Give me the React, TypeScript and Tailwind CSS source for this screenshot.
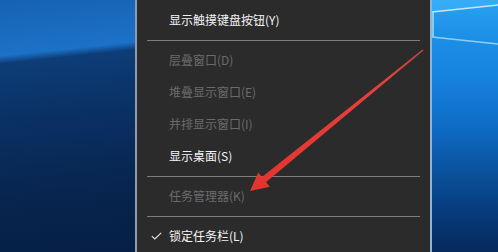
import React from 'react'

type Item = { label: string; disabled?: boolean; checked?: boolean } | 'sep'

const ITEMS: Item[] = [
    { label: '显示触摸键盘按钮(Y)' },
    'sep',
    { label: '层叠窗口(D)', disabled: true },
    { label: '堆叠显示窗口(E)', disabled: true },
    { label: '并排显示窗口(I)', disabled: true },
    { label: '显示桌面(S)' },
    'sep',
    { label: '任务管理器(K)', disabled: true },
    'sep',
    { label: '锁定任务栏(L)', checked: true },
]

const MenuRow: React.FC<{ item: Exclude<Item, 'sep'> }> = ({ item }) => (
    <div className="relative h-8 flex items-center pl-8 shrink-0">
        {item.checked && (
            <svg className="absolute left-[14px] top-[12px]" width="11" height="8" viewBox="0 0 11 8">
                <path d="M0.8 4.2 L3.8 7 L10.2 0.8" fill="none" stroke="#e6e6e6" strokeWidth="1.1" />
            </svg>
        )}
        <span className={item.disabled ? 'text-[#6b6b6b]' : 'text-[#f3f3f3]'}>{item.label}</span>
    </div>
)

const App: React.FC = () => {
    return (
        <div
            className="relative w-[498px] h-[252px] overflow-hidden flex text-[12px] leading-none"
            style={{ fontFamily: '"Noto Sans CJK SC", "Noto Sans", sans-serif' }}
        >
            {/* left wallpaper */}
            <div className="w-[135px] h-full bg-[linear-gradient(174deg,#1562b3_0%,#1c72c8_21%,#0d3d78_24%,#0a3164_45%,#07254f_75%,#061f45_100%)]" />
            <div className="w-[2px] h-full bg-[#8e9cae]" />

            {/* context menu */}
            <div className="w-[293px] h-full bg-[#2b2b2b] pt-1 flex flex-col">
                {ITEMS.map((item, i) =>
                    item === 'sep' ? (
                        <div key={i} className="h-2 flex items-center px-[10px] shrink-0">
                            <div className="h-px w-full bg-[#7e7e7e]" />
                        </div>
                    ) : (
                        <MenuRow key={i} item={item} />
                    )
                )}
            </div>

            <div className="w-[2px] h-full bg-[#8fb4d6]" />
            {/* right wallpaper */}
            <div className="relative w-[66px] h-full bg-[linear-gradient(180deg,#2aa2f2_0%,#1c8fe6_15%,#1684e0_30%,#0f6cc6_50%,#0a4f98_70%,#073674_88%,#062a5c_100%)]">
                <svg className="absolute inset-0" width="66" height="252" viewBox="0 0 66 252">
                    <polygon points="0,0 66,0 66,5 0,12" fill="#3ab0f6" opacity="0.7" />
                    <line x1="0" y1="12" x2="66" y2="5" stroke="#bfe8ff" strokeWidth="1.5" />
                    <line x1="1" y1="12" x2="1" y2="37" stroke="#a8dcfa" strokeWidth="1.5" />
                    <line x1="0" y1="37" x2="66" y2="44" stroke="#8fd0fa" strokeWidth="1.5" />
                </svg>
            </div>

            {/* red arrow annotation */}
            <svg className="absolute inset-0 pointer-events-none" width="498" height="252" viewBox="0 0 498 252">
                <defs>
                    <linearGradient id="shaft" x1="423" y1="50" x2="262" y2="182" gradientUnits="userSpaceOnUse">
                        <stop offset="0" stopColor="#c84a3a" />
                        <stop offset="0.3" stopColor="#e8403a" />
                        <stop offset="1" stopColor="#e33530" />
                    </linearGradient>
                </defs>
                <polygon points="423.4,50.4 422.6,49.4 259.4,178.9 263.8,184.1" fill="url(#shaft)" />
                <polygon points="250,191 258.3,172.4 269.8,186.8" fill="#e33530" />
            </svg>
        </div>
    )
}

export default App
